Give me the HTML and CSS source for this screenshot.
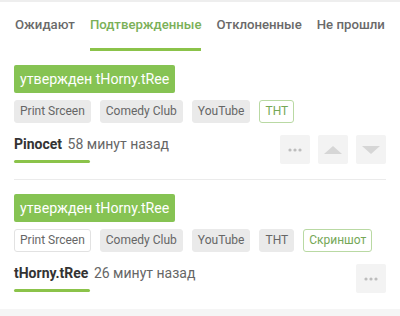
FILE: index.html
```html
<!DOCTYPE html>
<html lang="ru">
<head>
    <meta charset="UTF-8">
    <title>Подтвержденные</title>
    <link rel="stylesheet" href="styles.css">
</head>
<body>
<div class="top-band"></div>

<div class="tabs">
    <div class="tab">Ожидают</div>
    <div class="tab active">Подтвержденные</div>
    <div class="tab">Отклоненные</div>
    <div class="tab">Не прошли</div>
</div>

<div class="item">
    <div class="label">утвержден tHorny.tRee</div>
    <div class="tags">
        <span class="tag">Print Srceen</span>
        <span class="tag">Comedy Club</span>
        <span class="tag">YouTube</span>
        <span class="tag green">THT</span>
    </div>
    <div class="meta">
        <div class="who">
            <div><b>Pinocet</b> 58 минут назад</div>
            <div class="bar"></div>
        </div>
        <div class="actions">
            <button class="btn">
                <svg width="14" height="4" viewBox="0 0 14 4"><circle cx="2" cy="2" r="1.6"/><circle cx="7" cy="2" r="1.6"/><circle cx="12" cy="2" r="1.6"/></svg>
            </button>
            <button class="btn"><span class="tri up"></span></button>
            <button class="btn"><span class="tri down"></span></button>
        </div>
    </div>
</div>

<div class="item last">
    <div class="label">утвержден tHorny.tRee</div>
    <div class="tags">
        <span class="tag white">Print Srceen</span>
        <span class="tag">Comedy Club</span>
        <span class="tag">YouTube</span>
        <span class="tag">THT</span>
        <span class="tag green">Скриншот</span>
    </div>
    <div class="meta">
        <div class="who">
            <div><b>tHorny.tRee</b> 26 минут назад</div>
            <div class="bar"></div>
        </div>
        <div class="actions">
            <button class="btn">
                <svg width="14" height="4" viewBox="0 0 14 4"><circle cx="2" cy="2" r="1.6"/><circle cx="7" cy="2" r="1.6"/><circle cx="12" cy="2" r="1.6"/></svg>
            </button>
        </div>
    </div>
</div>

<div class="bottom-band"></div>
</body>
</html>
```

FILE: styles.css
```css
body {
    font-family: Roboto, "Liberation Sans", sans-serif;
    margin: 0;
    background-color: #fff;
    color: #555;
    width: 400px;
    height: 316px;
    overflow: hidden;
}
.top-band {
    height: 2px;
    background-color: #eeeeee;
}
.tabs {
    display: flex;
    gap: 15px;
    padding: 0 15px;
    height: 49px;
}
.tab {
    font-size: 13.2px;
    font-weight: 500;
    color: #6a6a6a;
    padding-top: 15px;
    white-space: nowrap;
    flex-shrink: 0;
    box-sizing: border-box;
}
.tab.active {
    color: #7bb058;
    border-bottom: 3px solid #8bc34a;
}
.item {
    margin: 0 14px;
    padding-top: 14px;
    padding-bottom: 15px;
    border-bottom: 1px solid #ebebeb;
}
.item.last {
    border-bottom: none;
    padding-bottom: 16px;
}
.label {
    display: inline-block;
    background-color: #86c353;
    color: #fff;
    font-size: 14.2px;
    line-height: 28px;
    padding: 0 6px;
    border-radius: 2px;
}
.tags {
    display: flex;
    gap: 9px;
    margin-top: 7px;
    white-space: nowrap;
}
.tag {
    font-size: 12px;
    line-height: 21px;
    padding: 0 5px;
    background-color: #eaeaea;
    color: #666;
    border: 1px solid #eaeaea;
    border-radius: 3px;
}
.tag.white {
    background-color: #fff;
    border-color: #e2e2e2;
}
.tag.green {
    background-color: #fff;
    border-color: #b9d9a3;
    color: #75a756;
}
.meta {
    display: flex;
    justify-content: space-between;
    margin-top: 12px;
}
.who {
    font-size: 14px;
    color: #666;
    padding-top: 1px;
}
.who b {
    color: #333;
    font-weight: 700;
    margin-right: 2px;
}
.bar {
    width: 76px;
    height: 3px;
    border-radius: 2px;
    background-color: #8bc34a;
    margin-top: 8px;
}
.actions {
    display: flex;
    gap: 8px;
}
.btn {
    width: 30px;
    height: 29px;
    border: none;
    border-radius: 2px;
    background-color: #f3f3f3;
    padding: 0;
    display: flex;
    align-items: center;
    justify-content: center;
}
.btn svg {
    fill: #bdbdbd;
}
.tri {
    width: 0;
    height: 0;
    border-left: 9px solid transparent;
    border-right: 9px solid transparent;
}
.tri.up {
    border-bottom: 8px solid #d6d6d6;
}
.tri.down {
    border-top: 8px solid #d6d6d6;
}
.bottom-band {
    height: 10px;
    background-color: #f5f5f5;
}
```
